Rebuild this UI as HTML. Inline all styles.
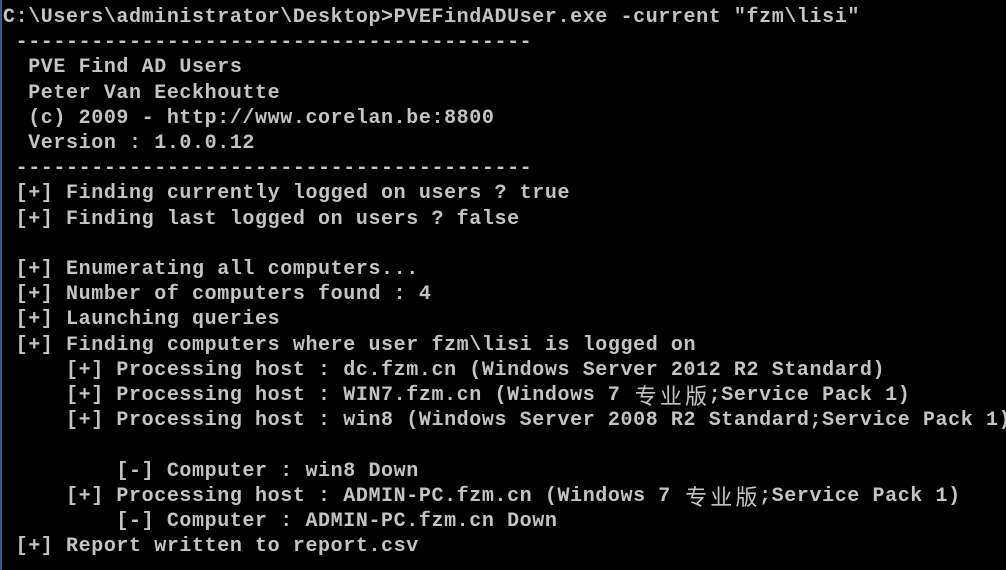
<!DOCTYPE html>
<html><head><meta charset="utf-8"><style>
html,body{margin:0;padding:0;background:#000;width:1006px;height:570px;overflow:hidden}
.b{position:absolute;left:0;top:0;width:2px;height:570px;background:#3a5a8a}
pre{position:absolute;left:3px;top:5px;margin:0;font-family:"Liberation Mono","Noto Sans CJK SC",monospace;font-weight:bold;font-size:20px;letter-spacing:0.6px;line-height:25.2px;color:#c4c4c4;white-space:pre}
.c{display:inline-block;width:25.2px;font-weight:normal;font-size:22px;text-align:center;font-family:"Noto Sans CJK SC",sans-serif;line-height:25px;vertical-align:top;letter-spacing:0}
</style></head><body><div class="b"></div><pre>C:\Users\administrator\Desktop&gt;PVEFindADUser.exe -current "fzm\lisi"
 -----------------------------------------
  PVE Find AD Users
  Peter Van Eeckhoutte
  (c) 2009 - http://www.corelan.be:8800
  Version : 1.0.0.12
 -----------------------------------------
 [+] Finding currently logged on users ? true
 [+] Finding last logged on users ? false

 [+] Enumerating all computers...
 [+] Number of computers found : 4
 [+] Launching queries
 [+] Finding computers where user fzm\lisi is logged on
     [+] Processing host : dc.fzm.cn (Windows Server 2012 R2 Standard)
     [+] Processing host : WIN7.fzm.cn (Windows 7 <span class="c">专</span><span class="c">业</span><span class="c">版</span>;Service Pack 1)
     [+] Processing host : win8 (Windows Server 2008 R2 Standard;Service Pack 1)

         [-] Computer : win8 Down
     [+] Processing host : ADMIN-PC.fzm.cn (Windows 7 <span class="c">专</span><span class="c">业</span><span class="c">版</span>;Service Pack 1)
         [-] Computer : ADMIN-PC.fzm.cn Down
 [+] Report written to report.csv
</pre></body></html>
